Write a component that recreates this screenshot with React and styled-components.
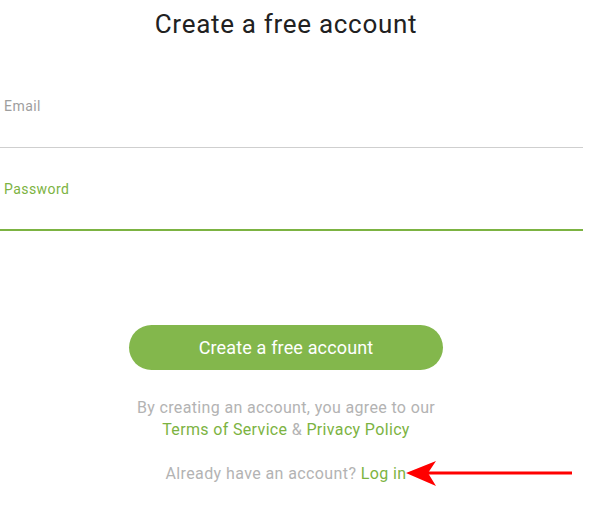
import styled, { createGlobalStyle } from "styled-components";

const GlobalStyle = createGlobalStyle`
  html, body {
    margin: 0;
    padding: 0;
    background: #ffffff;
    font-family: Roboto, "Liberation Sans", Arial, sans-serif;
  }
`;

const GREEN = "#7cb342";

function Arrow() {
  return (
    <svg width="176" height="36" viewBox="0 0 176 36">
      <line x1="24" y1="18" x2="172" y2="18" stroke="#ff0000" strokeWidth="3" />
      <polygon points="6,18 36,6 28,18 36,31" fill="#ff0000" />
    </svg>
  );
}

function Field({ label, active }) {
  return (
    <FieldBox $active={active}>
      <Label $active={active}>{label}</Label>
      <Input type={label === "Password" ? "password" : "text"} $active={active} />
    </FieldBox>
  );
}

export default function App() {
  return (
    <>
      <GlobalStyle />
      <Page>
        <Title>Create a free account</Title>
        <Fields>
          <Field label="Email" />
          <Field label="Password" active />
        </Fields>
        <Button>Create a free account</Button>
        <Agreement>
          By creating an account, you agree to our
          <br />
          <Link>Terms of Service</Link> &amp; <Link>Privacy Policy</Link>
        </Agreement>
        <LoginLine>
          Already have an account? <Link>Log in</Link>
        </LoginLine>
        <ArrowMark>
          <Arrow />
        </ArrowMark>
      </Page>
    </>
  );
}

const Page = styled.div`
  position: relative;
  width: 572px;
  display: flex;
  flex-direction: column;
  align-items: center;
  padding-top: 9px;
  padding-bottom: 20px;
`;

const Title = styled.h1`
  margin: 0;
  font-size: 26px;
  font-weight: 400;
  line-height: 30px;
  letter-spacing: 0.7px;
  color: #212121;
`;

const Fields = styled.div`
  align-self: stretch;
  width: 583px;
  margin-top: 26px;
  display: flex;
  flex-direction: column;
`;

const FieldBox = styled.div`
  padding-top: 31px;
  display: flex;
  flex-direction: column;
  border-bottom: ${(p) => (p.$active ? `2px solid ${GREEN}` : "1px solid #cfcfcf")};
`;

const Label = styled.label`
  padding-left: 4px;
  font-size: 14px;
  line-height: 20px;
  letter-spacing: 0.45px;
  color: ${(p) => (p.$active ? GREEN : "#9e9e9e")};
`;

const Input = styled.input`
  height: ${(p) => (p.$active ? "30px" : "31px")};
  border: none;
  outline: none;
  padding: 0 4px;
  background: transparent;
  font-family: inherit;
  font-size: 16px;
`;

const Button = styled.button`
  margin-top: 94px;
  width: 314px;
  height: 45px;
  border: none;
  border-radius: 23px;
  background: #83b74c;
  color: #ffffff;
  font-family: inherit;
  font-size: 18px;
  letter-spacing: 0.15px;
  cursor: pointer;
`;

const Agreement = styled.p`
  margin: 27px 0 0;
  text-align: center;
  font-size: 16px;
  line-height: 22px;
  letter-spacing: 0.35px;
  color: #b3b3b3;
`;

const LoginLine = styled.p`
  margin: 22px 0 0;
  text-align: center;
  font-size: 16px;
  line-height: 22px;
  letter-spacing: 0.4px;
  color: #b3b3b3;
`;

const Link = styled.a`
  color: ${GREEN};
  text-decoration: none;
  cursor: pointer;
`;

const ArrowMark = styled.div`
  position: absolute;
  left: 400px;
  top: 455px;
  line-height: 0;
`;
